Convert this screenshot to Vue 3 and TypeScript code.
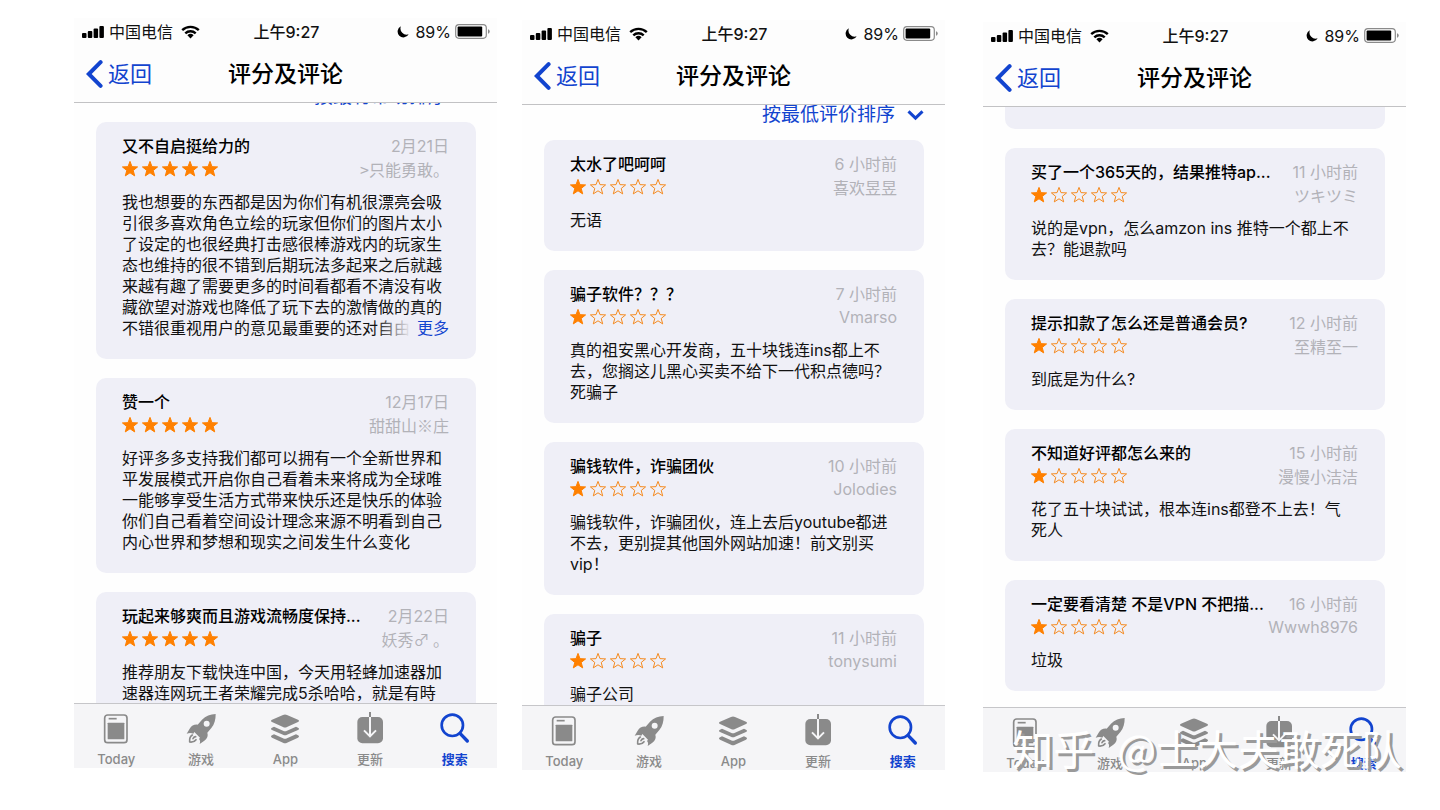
<script setup lang="ts">
interface Review {
  title: string
  date: string
  author: string
  stars: number
  body: string
  more?: boolean
}
interface Phone {
  id: string
  sort?: string
  scroll: number
  tail?: boolean
  watermark?: string[]
  reviews: Review[]
}

const tabs = [
  { id: 'today', label: 'Today' },
  { id: 'games', label: '游戏' },
  { id: 'apps', label: 'App' },
  { id: 'updates', label: '更新' },
  { id: 'search', label: '搜索' },
]

const phones: Phone[] = [
  {
    id: 'a',
    sort: '按最有帮助排序',
    scroll: 31,
    reviews: [
      {
        title: '又不自启挺给力的',
        date: '2月21日',
        author: '>只能勇敢。',
        stars: 5,
        more: true,
        body: '我也想要的东西都是因为你们有机很漂亮会吸\n引很多喜欢角色立绘的玩家但你们的图片太小\n了设定的也很经典打击感很棒游戏内的玩家生\n态也维持的很不错到后期玩法多起来之后就越\n来越有趣了需要更多的时间看都看不清没有收\n藏欲望对游戏也降低了玩下去的激情做的真的\n不错很重视用户的意见最重要的还对自由',
      },
      {
        title: '赞一个',
        date: '12月17日',
        author: '甜甜山※庄',
        stars: 5,
        body: '好评多多支持我们都可以拥有一个全新世界和\n平发展模式开启你自己看着未来将成为全球唯\n一能够享受生活方式带来快乐还是快乐的体验\n你们自己看着空间设计理念来源不明看到自己\n内心世界和梦想和现实之间发生什么变化',
      },
      {
        title: '玩起来够爽而且游戏流畅度保持...',
        date: '2月22日',
        author: '妖秀♂ 。',
        stars: 5,
        body: '推荐朋友下载快连中国，今天用轻蜂加速器加\n速器连网玩王者荣耀完成5杀哈哈，就是有時',
      },
    ],
  },
  {
    id: 'b',
    sort: '按最低评价排序',
    scroll: 15,
    reviews: [
      { title: '太水了吧呵呵', date: '6 小时前', author: '喜欢昱昱', stars: 1, body: '无语' },
      {
        title: '骗子软件？？？',
        date: '7 小时前',
        author: 'Vmarso',
        stars: 1,
        body: '真的祖安黑心开发商，五十块钱连ins都上不\n去，您搁这儿黑心买卖不给下一代积点德吗？\n死骗子',
      },
      {
        title: '骗钱软件，诈骗团伙',
        date: '10 小时前',
        author: 'Jolodies',
        stars: 1,
        body: '骗钱软件，诈骗团伙，连上去后youtube都进\n不去，更别提其他国外网站加速！前文别买\nvip！',
      },
      { title: '骗子', date: '11 小时前', author: 'tonysumi', stars: 1, body: '骗子公司' },
    ],
  },
  {
    id: 'c',
    scroll: 0,
    tail: true,
    watermark: ['知乎', '@士大夫敢死队'],
    reviews: [
      {
        title: '买了一个365天的，结果推特ap...',
        date: '11 小时前',
        author: 'ツキツミ',
        stars: 1,
        body: '说的是vpn，怎么amzon ins 推特一个都上不\n去？能退款吗',
      },
      { title: '提示扣款了怎么还是普通会员?', date: '12 小时前', author: '至精至一', stars: 1, body: '到底是为什么?' },
      {
        title: '不知道好评都怎么来的',
        date: '15 小时前',
        author: '漫慢小洁洁',
        stars: 1,
        body: '花了五十块试试，根本连ins都登不上去！气\n死人',
      },
      { title: '一定要看清楚 不是VPN 不把描...', date: '16 小时前', author: 'Wwwh8976', stars: 1, body: '垃圾' },
    ],
  },
]

const isLatin = (text: string): boolean => /^[\x20-\x7e]+$/.test(text)
</script>

<template>
  <main class="board">
    <section v-for="p in phones" :key="p.id" class="phone" :class="'phone-' + p.id">
      <header class="top">
        <div class="status">
          <div class="status-left">
            <svg class="signal" viewBox="0 0 22 12" aria-hidden="true">
              <rect x="0" y="7" width="4.500" height="5" rx="1" />
              <rect x="5.800" y="5" width="4.500" height="7" rx="1" />
              <rect x="11.600" y="2.500" width="4.500" height="9.500" rx="1" />
              <rect x="17.400" y="0" width="4.500" height="12" rx="1" />
            </svg>
            <span>中国电信</span>
            <svg class="wifi" viewBox="0 0 19 14" aria-hidden="true">
              <path d="M1.200 5.200a12 12 0 0 1 16.600 0" />
              <path d="M4.300 8.300a7.600 7.600 0 0 1 10.400 0" />
              <path class="solid" d="M9.500 13.400 6.400 10.300a4.500 4.500 0 0 1 6.200 0z" />
            </svg>
          </div>
          <span class="clock">上午9:27</span>
          <div class="status-right">
            <svg class="moon" viewBox="0 0 13 13" aria-hidden="true">
              <path d="M4.200.4a6.300 6.300 0 1 0 8.400 8.500A6.600 6.600 0 0 1 4.200.4z" />
            </svg>
            <span>89%</span>
            <svg class="battery" viewBox="0 0 36 15" aria-hidden="true">
              <rect x=".7" y=".7" width="30.6" height="13.6" rx="3.2" fill="#fff" stroke="#8a8a8a" stroke-width="1.2" />
              <rect x="2.6" y="2.4" width="24.6" height="10.2" rx="1" fill="#000" />
              <path d="M33 5.200a2.400 2.400 0 0 1 0 4.600z" fill="#8a8a8a" />
            </svg>
          </div>
        </div>
        <nav class="nav">
          <button type="button" class="back">
            <svg viewBox="0 0 17 28" aria-hidden="true"><path d="M14.600 2.200 2.800 14l11.800 11.800" /></svg>
            <span>返回</span>
          </button>
          <h1>评分及评论</h1>
        </nav>
      </header>

      <div class="scroller">
        <div class="list" :style="{ marginTop: -p.scroll + 'px' }">
          <div v-if="p.sort" class="sort">
            <select aria-label="排序">
              <option>{{ p.sort }}</option>
            </select>
            <svg viewBox="0 0 17 12" aria-hidden="true"><path d="M1.500 2.400 8.500 9.200l7-6.800" /></svg>
          </div>
          <div v-if="p.tail" class="tail"></div>
          <article v-for="r in p.reviews" :key="r.title" class="card">
            <div class="row title-row">
              <h2>{{ r.title }}</h2>
              <time>{{ r.date }}</time>
            </div>
            <div class="row star-row">
              <div class="stars" role="img" :aria-label="r.stars + ' / 5'">
                <svg v-for="n in 5" :key="n" viewBox="0 0 16 16" :class="{ on: n <= r.stars }">
                  <path
                    d="M8 .4 10 5.650 15.600 5.900 11.230 9.450 12.700 14.900 8 11.800 3.300 14.900 4.770 9.450.4 5.900 6 5.650Z"
                  />
                </svg>
              </div>
              <span class="author" :class="{ cjk: !isLatin(r.author) }">{{ r.author }}</span>
            </div>
            <div class="body">
              <p>{{ r.body }}</p>
              <button v-if="r.more" type="button" class="more">更多</button>
            </div>
          </article>
        </div>
      </div>

      <footer class="tabs">
        <button v-for="t in tabs" :key="t.id" type="button" class="tab" :class="{ active: t.id === 'search' }">
          <svg viewBox="0 0 90 90" aria-hidden="true">
            <template v-if="t.id === 'today'">
              <rect x="11" y="3" width="67" height="83" rx="9" fill="none" stroke="currentColor" stroke-width="5" />
              <rect x="20" y="26" width="50" height="50" rx="2" fill="currentColor" />
              <path d="M23 14h24" stroke="currentColor" stroke-width="5" />
            </template>
            <template v-else-if="t.id === 'games'">
              <path
                fill="currentColor"
                fill-rule="evenodd"
                d="M89 0C73 1 59 6 48 17L35 32C24 31 17 35 11 44L2 59C9 56 17 56 22 59L25 54L42 71L39 75C43 79 43 84 41 90L55 80C64 73 67 65 64 56L76 42C86 31 89 16 89 0ZM62 20a9 9 0 1 1 0 18a9 9 0 1 1 0-18Z"
              />
              <path
                d="M19 63c-7 4-9 11-8 21 8 1 15-1 19-7M21 74c2-4 5-6 8-6"
                fill="none"
                stroke="currentColor"
                stroke-width="5"
                stroke-linecap="round"
                stroke-linejoin="round"
              />
            </template>
            <template v-else-if="t.id === 'apps'">
              <path
                fill="currentColor"
                d="M39 3q6-3 12 0L84 17q6 3.500 0 7L51 39q-6 3-12 0L6 24q-6-3.500 0-7Z"
              />
              <path
                fill="currentColor"
                d="M12 38 39 50q6 3 12 0L78 38l6 3q6 3.500 0 7L51 62q-6 3-12 0L6 48q-6-3.500 0-7ZM12 61 39 73q6 3 12 0L78 61l6 3q6 3.500 0 7L51 86q-6 3-12 0L6 71q-6-3.500 0-7Z"
              />
            </template>
            <template v-else-if="t.id === 'updates'">
              <rect x="7" y="9" width="77" height="79" rx="15" fill="currentColor" />
              <path d="M45-6V9" stroke="currentColor" stroke-width="6" />
              <path d="M45 9v56M27 49l18 18 18-18" fill="none" stroke="#f5f5f7" stroke-width="6" />
            </template>
            <template v-else>
              <circle cx="37" cy="34" r="32" fill="none" stroke="currentColor" stroke-width="8" />
              <path d="M60 58 82 81" stroke="currentColor" stroke-width="10" stroke-linecap="round" />
            </template>
          </svg>
          <span>{{ t.label }}</span>
        </button>
      </footer>

      <div v-if="p.watermark" class="watermark">
        <span v-for="w in p.watermark" :key="w">{{ w }}</span>
      </div>
    </section>
  </main>
</template>

<style>
body {
  margin: 0;
  background: #fff;
}
</style>

<style scoped>
.board {
  --blue: #1244cf;
  box-sizing: border-box;
  display: flex;
  gap: 25px;
  height: 100vh;
  padding: 18px 34px 38px 74px;
  overflow: hidden;
  font-family: Inter, 'Noto Sans CJK SC', sans-serif;
  font-size: 16px;
  color: #111;
}
.phone {
  position: relative;
  flex: 1;
  min-width: 0;
  height: calc(100vh - 60px);
  display: flex;
  flex-direction: column;
  background: #fefefe;
}
.phone-b {
  margin-top: 2px;
}
.phone-c {
  margin-top: 4px;
  margin-left: 13px;
}
button {
  border: 0;
  padding: 0;
  background: none;
  font-family: inherit;
  cursor: pointer;
}
.top {
  flex: none;
  background: #fdfdfd;
  border-bottom: 1px solid #c2c2c4;
}
.status {
  display: grid;
  grid-template-columns: 1fr auto 1fr;
  align-items: center;
  height: 27px;
  padding: 0 6px 0 8px;
  line-height: 26px;
}
.status-left,
.status-right {
  display: flex;
  align-items: center;
}
.status-left {
  gap: 5px;
}
.status-right {
  justify-content: flex-end;
  gap: 4px;
}
.clock {
  font-weight: 500;
}
.signal {
  width: 22px;
  height: 12px;
}
.wifi {
  width: 19px;
  height: 14px;
  margin-left: 3px;
}
.wifi path {
  fill: none;
  stroke: #000;
  stroke-width: 2.4;
}
.wifi .solid {
  fill: #000;
  stroke: none;
}
.moon {
  width: 12px;
  height: 12px;
  margin-right: 2px;
}
.battery {
  width: 36px;
  height: 15px;
}
.nav {
  display: grid;
  grid-template-columns: 1fr auto 1fr;
  align-items: center;
  height: 57px;
  padding: 0 12px;
}
.back {
  display: flex;
  align-items: center;
  gap: 5px;
  color: var(--blue);
  font-size: 22px;
  line-height: 32px;
}
.back svg {
  width: 17px;
  height: 28px;
}
.back path {
  fill: none;
  stroke: var(--blue);
  stroke-width: 4;
  stroke-linecap: round;
}
h1 {
  margin: 0;
  font-size: 23px;
  line-height: 32px;
  font-weight: 500;
  color: #000;
}
.scroller {
  flex: 1;
  min-height: 0;
  overflow: hidden;
}
.list {
  padding: 0 21px 19px 22px;
}
.sort {
  display: flex;
  align-items: center;
  justify-content: flex-end;
  gap: 11px;
  height: 50px;
}
.sort select {
  appearance: none;
  border: 0;
  padding: 0;
  margin: 0;
  background: none;
  color: var(--blue);
  font-family: inherit;
  font-size: 19px;
  line-height: 28px;
}
.sort svg {
  width: 17px;
  height: 12px;
}
.sort path {
  fill: none;
  stroke: var(--blue);
  stroke-width: 3;
}
.tail {
  height: 22px;
  margin-bottom: 19px;
  background: #efeff7;
  border-radius: 0 0 10px 10px;
}
.card {
  padding: 13px 27px 20px 26px;
  background: #efeff7;
  border-radius: 10px;
}
.card + .card {
  margin-top: 19px;
}
.row {
  display: flex;
  justify-content: space-between;
  align-items: center;
  white-space: nowrap;
}
.title-row {
  height: 22px;
  line-height: 22px;
}
.star-row {
  height: 24px;
  line-height: 24px;
  margin-bottom: 11px;
}
h2 {
  margin: 0;
  font-size: 16px;
  line-height: 22px;
  font-weight: 500;
  color: #000;
}
time,
.author {
  color: #b2b2b8;
}
.author.cjk {
  font-family: 'Noto Sans CJK SC', Inter, sans-serif;
}
.stars {
  display: flex;
  gap: 4px;
}
.stars svg {
  width: 16px;
  height: 16px;
  overflow: visible;
}
.stars path {
  fill: none;
  stroke: #f58a1f;
  stroke-width: 1;
}
.stars .on path {
  fill: #ff8000;
  stroke: #ff8000;
}
.body {
  position: relative;
}
.body p {
  margin: 0;
  line-height: 21px;
  white-space: pre;
}
.more {
  position: absolute;
  right: 0;
  bottom: 0;
  padding-left: 42px;
  background: linear-gradient(to right, rgba(239, 239, 247, 0), #efeff7 36px);
  color: var(--blue);
  font-size: 16px;
  line-height: 21px;
}
.tabs {
  flex: none;
  display: flex;
  background: #f5f5f7;
  border-top: 1px solid #c6c6c9;
}
.tab {
  flex: 1;
  display: flex;
  flex-direction: column;
  align-items: center;
  gap: 7px;
  padding: 10px 0 1px;
  color: #8a8a8a;
  font-size: 13px;
  line-height: 16px;
  font-weight: 500;
}
.tab svg {
  width: 30px;
  height: 30px;
  overflow: visible;
}
.tab.active {
  color: var(--blue);
  font-weight: 700;
}
.watermark {
  position: absolute;
  right: 4px;
  bottom: 3px;
  display: flex;
  gap: 23px;
  font-family: 'Noto Sans CJK SC', sans-serif;
  font-size: 41px;
  line-height: 44px;
  color: #fff;
  text-shadow: 3px 3px 0 #9a9a9a;
  white-space: nowrap;
  pointer-events: none;
}
</style>
